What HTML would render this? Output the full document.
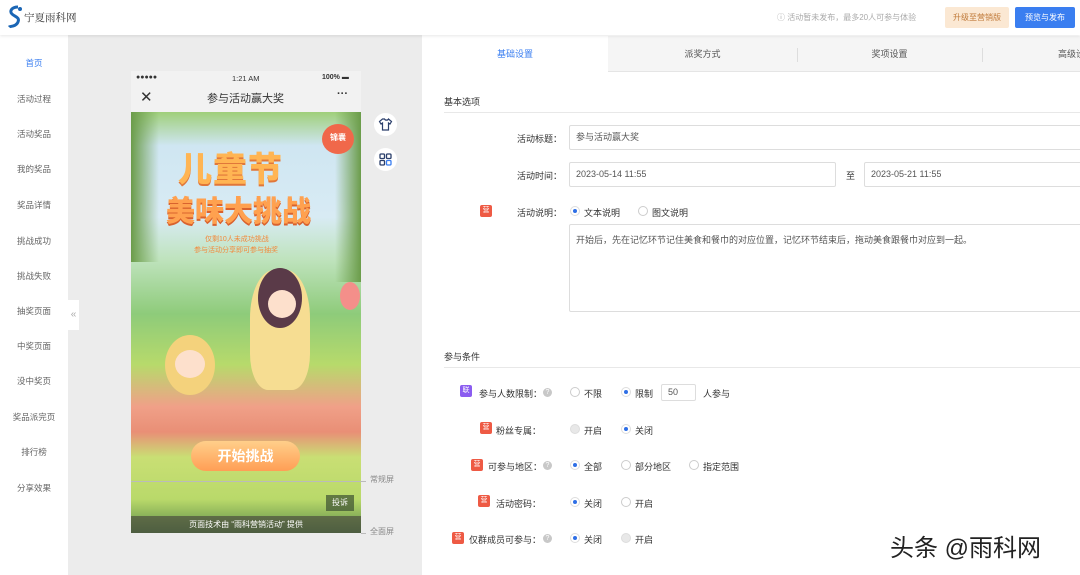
<!DOCTYPE html><html><head><meta charset="utf-8"><style>
*{margin:0;padding:0;box-sizing:border-box}
body{width:1080px;height:575px;overflow:hidden;font-family:"Liberation Sans","Noto Sans CJK SC",sans-serif;font-size:9px;color:#333;background:#fff;position:relative}
.a{position:absolute;white-space:nowrap}
.hdr{left:0;top:0;width:1080px;height:35px;background:#fff;box-shadow:0 1px 3px rgba(0,0,0,.1);z-index:2}
.side{left:0;top:35px;width:68px;height:540px;background:#fff}
.side div{position:absolute;left:0;width:68px;text-align:center;color:#666;font-size:8.5px}
.canvas{left:68px;top:35px;width:354px;height:540px;background:#ececec}
.tabs{left:422px;top:36px;width:658px;height:36px;background:#f5f5f5;border-bottom:1px solid #e5e5e5}
.lbl{text-align:right;width:140px;color:#333}
.inp{border:1px solid #ddd;border-radius:2px;background:#fff;padding-left:6px;color:#555}
.r{width:10px;height:10px;border-radius:50%;border:1px solid #ccc;background:#fff}
.r.on{border-color:#ddd}
.r.on::after{content:"";position:absolute;left:2px;top:2px;width:4px;height:4px;border-radius:50%;background:#2f6fe6}
.r.dis{background:#e8e8e8;border-color:#ddd}
.tag{width:12px;height:12px;border-radius:2px;background:#ee5a44;color:#fff;font-size:7px;text-align:center;line-height:12px}
.q{width:9px;height:9px;border-radius:50%;background:#c8c8c8;color:#fff;font-size:7px;line-height:9px;text-align:center}
</style></head><body>
<div class="a hdr">
 <svg class="a" style="left:6px;top:5px" width="18" height="24" viewBox="0 0 18 24"><path d="M12 2C6 2 3 6 6 9s8 3 6 8-8 4-9 5" stroke="#1b66b5" stroke-width="3" fill="none"/><circle cx="14" cy="4" r="2" fill="#1b66b5"/></svg>
 <div class="a" style="left:24px;top:10px;font-family:'Noto Serif CJK SC',serif;font-size:10.5px;color:#333">宁夏雨科网</div>
 <div class="a" style="left:777px;top:12px;color:#aaa;font-size:8px">ⓘ 活动暂未发布，最多20人可参与体验</div>
 <div class="a" style="left:945px;top:7px;width:64px;height:21px;background:#fbe8d3;border-radius:2px;color:#c07a3a;font-size:8px;text-align:center;line-height:21px">升级至营销版</div>
 <div class="a" style="left:1015px;top:7px;width:60px;height:21px;background:#3a7ef0;border-radius:2px;color:#fff;font-size:8px;text-align:center;line-height:21px">预览与发布</div>
</div>
<div class="a side">
 <div style="top:22px;color:#3a7ef0">首页</div><div style="top:58px">活动过程</div><div style="top:93px">活动奖品</div><div style="top:128px">我的奖品</div><div style="top:164px">奖品详情</div><div style="top:200px">挑战成功</div><div style="top:235px">挑战失败</div><div style="top:270px">抽奖页面</div><div style="top:305px">中奖页面</div><div style="top:340px">没中奖页</div><div style="top:376px">奖品派完页</div><div style="top:411px">排行榜</div><div style="top:447px">分享效果</div>
</div>
<div class="a canvas"></div>
<div class="a" style="left:68px;top:300px;width:11px;height:30px;background:#fff;color:#aaa;font-size:10px;line-height:30px;text-align:center">«</div>
<!-- phone -->
<div class="a" style="left:131px;top:71px;width:230px;height:41px;background:#f2f2f2"></div>
<div class="a" style="left:136px;top:74px;font-size:7px;font-weight:bold">●●●●●</div>
<div class="a" style="left:232px;top:74px;font-size:7.5px">1:21 AM</div>
<div class="a" style="left:322px;top:74px;font-size:7px;font-weight:bold">100% ▬</div>
<div class="a" style="left:140px;top:88px;font-size:15px">✕</div>
<div class="a" style="left:207px;top:90px;font-size:11px">参与活动赢大奖</div>
<div class="a" style="left:337px;top:88px;font-size:11px;font-weight:bold">···</div>
<div class="a" style="left:131px;top:112px;width:230px;height:421px;background:linear-gradient(180deg,#9fcf7a 0%,#cfe6f2 8%,#d8ebf4 25%,#bfe3bd 35%,#8ecb7a 48%,#b7da6b 60%,#f0a088 70%,#e98f76 76%,#c9df74 82%,#b9d96a 92%,#5c8a4a 100%)"></div>
<div class="a" style="left:131px;top:112px;width:28px;height:150px;background:linear-gradient(90deg,#6b9c4a,#9bbf6a00)"></div>
<div class="a" style="left:335px;top:112px;width:26px;height:170px;background:linear-gradient(270deg,#6b9c4a,#9bbf6a00)"></div>
<div class="a" style="left:322px;top:124px;width:32px;height:30px;border-radius:50%;background:#f0684a;color:#fff;font-size:8px;text-align:center;line-height:28px;font-weight:bold">锦囊</div>
<div class="a" style="left:178px;top:142px;font-size:34px;font-weight:900;color:#ffb553;letter-spacing:1px;text-shadow:0 2px 0 #e0773a">儿童节</div>
<div class="a" style="left:166px;top:188px;font-size:29px;font-weight:900;color:#ffa14f;text-shadow:0 2px 0 #d9622e">美味大挑战</div>
<div class="a" style="left:205px;top:234px;font-size:7px;color:#f28a3d">仅剩10人未成功挑战</div>
<div class="a" style="left:194px;top:245px;font-size:7px;color:#f28a3d">参与活动分享即可参与抽奖</div>
<div class="a" style="left:250px;top:270px;width:60px;height:120px;border-radius:40% 40% 30% 30%;background:#f6dd92"></div>
<div class="a" style="left:258px;top:268px;width:44px;height:60px;border-radius:50%;background:#5a3a48"></div>
<div class="a" style="left:268px;top:290px;width:28px;height:28px;border-radius:50%;background:#fde0cc"></div>
<div class="a" style="left:165px;top:335px;width:50px;height:60px;border-radius:50%;background:#f4d27c"></div>
<div class="a" style="left:175px;top:350px;width:30px;height:28px;border-radius:50%;background:#fde0cc"></div>
<div class="a" style="left:340px;top:282px;width:20px;height:28px;border-radius:50%;background:#f48f8a"></div>
<div class="a" style="left:191px;top:441px;width:109px;height:30px;border-radius:15px;background:linear-gradient(#ffcf8a,#ff9e55);color:#fff;font-size:14px;font-weight:bold;text-align:center;line-height:30px">开始挑战</div>
<div class="a" style="left:131px;top:481px;width:235px;border-top:1px solid #bbb"></div>
<div class="a" style="left:370px;top:474px;font-size:8px;color:#888">常规屏</div>
<div class="a" style="left:326px;top:495px;width:28px;height:16px;background:rgba(60,80,50,.7);color:#fff;font-size:8px;text-align:center;line-height:16px">投诉</div>
<div class="a" style="left:131px;top:516px;width:230px;height:17px;background:rgba(70,70,60,.65);color:#fff;font-size:8px;text-align:center;line-height:17px">页面技术由 “雨科营销活动” 提供</div>
<div class="a" style="left:361px;top:533px;width:5px;border-top:1px solid #bbb"></div>
<div class="a" style="left:370px;top:526px;font-size:8px;color:#888">全面屏</div>
<div class="a" style="left:374px;top:113px;width:23px;height:23px;border-radius:50%;background:#fff"><svg width="23" height="23"><path d="M8.5 6l-3 2.5 1.5 2.5 1.5-1V17h6V10l1.5 1 1.5-2.5-3-2.5c-.5 1.5-3.5 1.5-4 0z" fill="none" stroke="#2b3f6b" stroke-width="1.2"/></svg></div>
<div class="a" style="left:374px;top:148px;width:23px;height:23px;border-radius:50%;background:#fff"><svg width="23" height="23"><g fill="none" stroke="#2b3f6b" stroke-width="1.3"><rect x="6" y="6" width="4.5" height="4.5" rx="1"/><rect x="12.5" y="6" width="4.5" height="4.5" rx="1"/><rect x="6" y="12.5" width="4.5" height="4.5" rx="1"/><rect x="12.5" y="12.5" width="4.5" height="4.5" rx="1" stroke="#3a7ef0"/></g></svg></div>
<!-- right -->
<div class="a tabs"></div>
<div class="a" style="left:422px;top:36px;width:186px;height:37px;background:#fff;color:#3a7ef0;text-align:center;line-height:36px">基础设置</div>
<div class="a" style="left:608px;top:36px;width:189px;text-align:center;line-height:36px;color:#555">派奖方式</div>
<div class="a" style="left:797px;top:48px;height:14px;border-left:1px solid #ddd"></div>
<div class="a" style="left:797px;top:36px;width:185px;text-align:center;line-height:36px;color:#555">奖项设置</div>
<div class="a" style="left:982px;top:48px;height:14px;border-left:1px solid #ddd"></div>
<div class="a" style="left:1058px;top:36px;line-height:36px;color:#555">高级设</div>
<div class="a" style="left:444px;top:95px">基本选项</div>
<div class="a" style="left:444px;top:112px;width:636px;border-top:1px solid #e8e8e8"></div>
<div class="a lbl" style="left:422px;top:132px">活动标题：</div>
<div class="a inp" style="left:569px;top:125px;width:520px;height:25px;line-height:23px">参与活动赢大奖</div>
<div class="a lbl" style="left:422px;top:169px">活动时间：</div>
<div class="a inp" style="left:569px;top:162px;width:267px;height:25px;line-height:23px">2023-05-14 11:55</div>
<div class="a" style="left:846px;top:169px">至</div>
<div class="a inp" style="left:864px;top:162px;width:230px;height:25px;line-height:23px">2023-05-21 11:55</div>
<div class="a tag" style="left:480px;top:205px">营</div>
<div class="a lbl" style="left:422px;top:206px">活动说明：</div>
<div class="a r on" style="left:570px;top:206px"></div><div class="a" style="left:584px;top:206px">文本说明</div>
<div class="a r" style="left:638px;top:206px"></div><div class="a" style="left:652px;top:206px">图文说明</div>
<div class="a inp" style="left:569px;top:224px;width:520px;height:88px;padding-top:8px">开始后，先在记忆环节记住美食和餐巾的对应位置，记忆环节结束后，拖动美食跟餐巾对应到一起。</div>
<div class="a" style="left:444px;top:350px">参与条件</div>
<div class="a" style="left:444px;top:367px;width:636px;border-top:1px solid #e8e8e8"></div>
<div class="a tag" style="left:460px;top:385px;background:#8b5cf0">联</div>
<div class="a" style="left:479px;top:387px">参与人数限制：</div><div class="a q" style="left:543px;top:388px">?</div>
<div class="a r" style="left:570px;top:387px"></div><div class="a" style="left:584px;top:387px">不限</div>
<div class="a r on" style="left:621px;top:387px"></div><div class="a" style="left:635px;top:387px">限制</div>
<div class="a inp" style="left:661px;top:384px;width:35px;height:17px;line-height:15px">50</div>
<div class="a" style="left:703px;top:387px">人参与</div>
<div class="a tag" style="left:480px;top:422px">营</div><div class="a" style="left:496px;top:424px">粉丝专属：</div>
<div class="a r dis" style="left:570px;top:424px"></div><div class="a" style="left:584px;top:424px">开启</div>
<div class="a r on" style="left:621px;top:424px"></div><div class="a" style="left:635px;top:424px">关闭</div>
<div class="a tag" style="left:471px;top:459px">营</div><div class="a" style="left:488px;top:460px">可参与地区：</div><div class="a q" style="left:543px;top:461px">?</div>
<div class="a r on" style="left:570px;top:460px"></div><div class="a" style="left:584px;top:460px">全部</div>
<div class="a r" style="left:621px;top:460px"></div><div class="a" style="left:635px;top:460px">部分地区</div>
<div class="a r" style="left:689px;top:460px"></div><div class="a" style="left:703px;top:460px">指定范围</div>
<div class="a tag" style="left:478px;top:495px">营</div><div class="a" style="left:496px;top:497px">活动密码：</div>
<div class="a r on" style="left:570px;top:497px"></div><div class="a" style="left:584px;top:497px">关闭</div>
<div class="a r" style="left:621px;top:497px"></div><div class="a" style="left:635px;top:497px">开启</div>
<div class="a tag" style="left:452px;top:532px">营</div><div class="a" style="left:469px;top:533px">仅群成员可参与：</div><div class="a q" style="left:543px;top:534px">?</div>
<div class="a r on" style="left:570px;top:533px"></div><div class="a" style="left:584px;top:533px">关闭</div>
<div class="a r dis" style="left:621px;top:533px"></div><div class="a" style="left:635px;top:533px">开启</div>
<div class="a" style="left:890px;top:528px;font-size:24px;color:#222;text-shadow:0 0 3px #fff">头条 @雨科网</div>
</body></html>
